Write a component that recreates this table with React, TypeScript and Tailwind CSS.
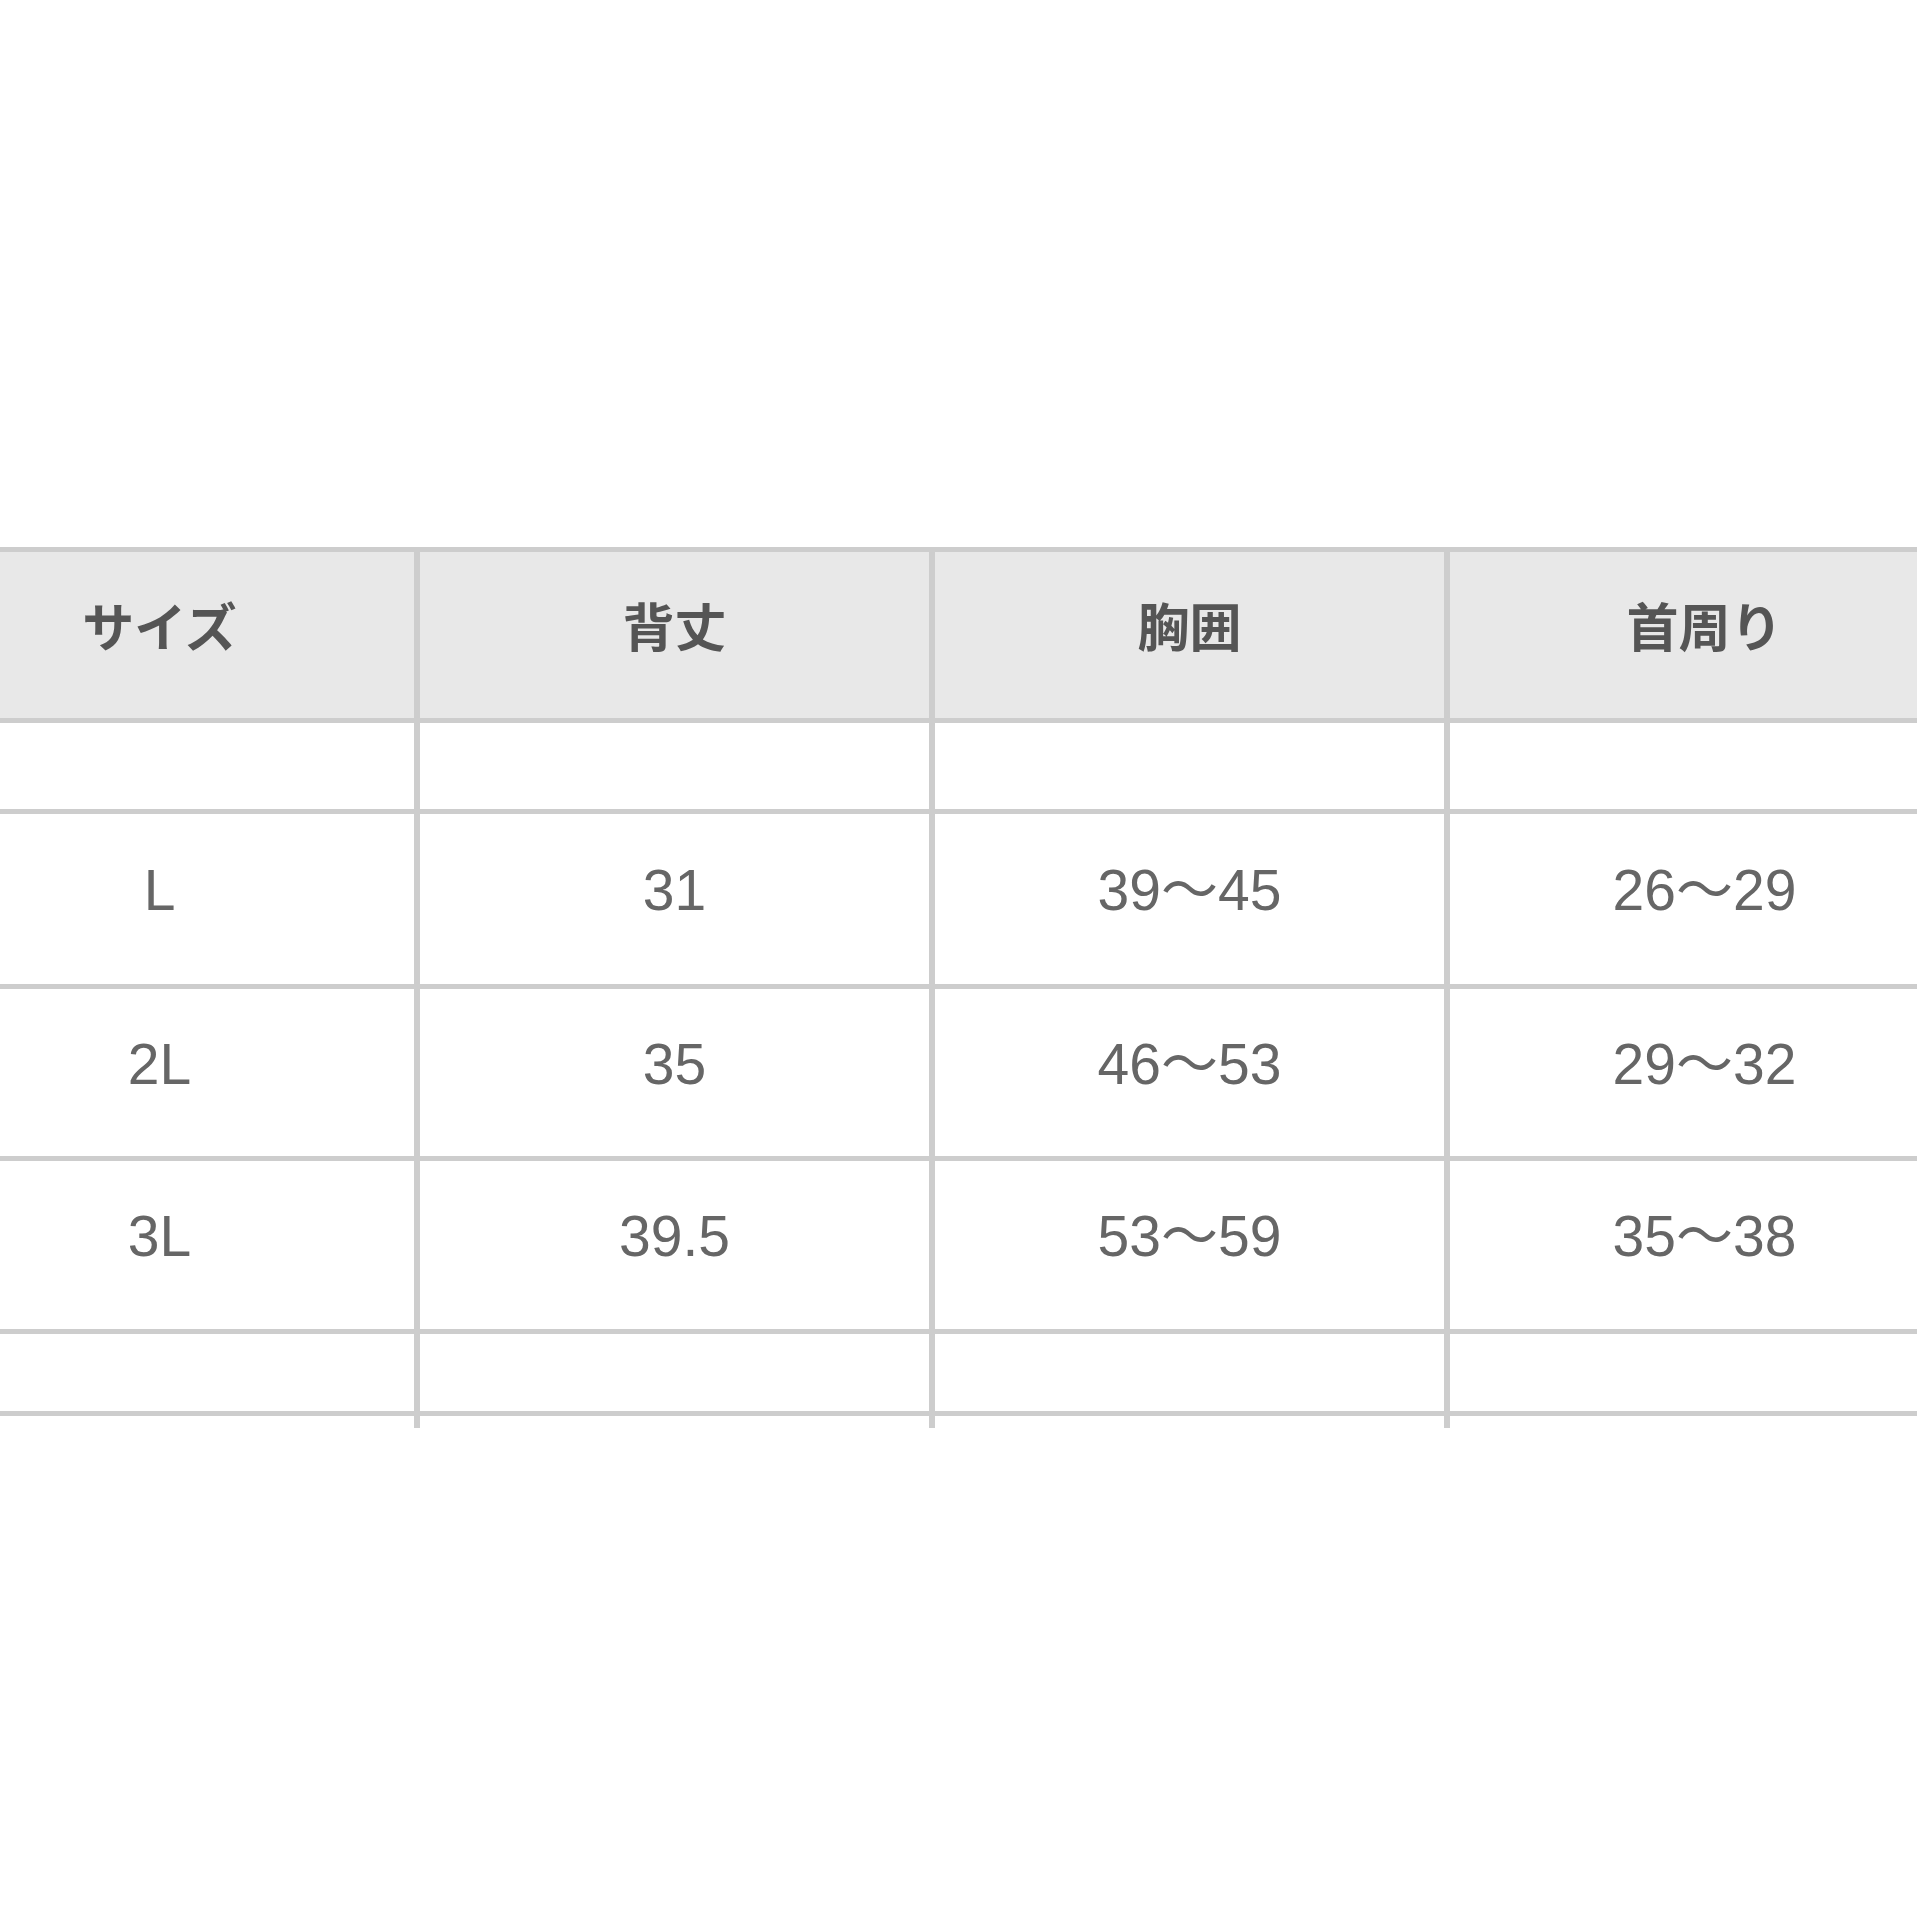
const HEADERS = ["サイズ", "背丈", "胸囲", "首周り"]

const ROWS: { cells: string[]; h: string }[] = [
  { cells: ["", "", "", ""], h: "h-[86px]" },
  { cells: ["L", "31", "39〜45", "26〜29"], h: "h-[170px]" },
  { cells: ["2L", "35", "46〜53", "29〜32"], h: "h-[167px]" },
  { cells: ["3L", "39.5", "53〜59", "35〜38"], h: "h-[168px]" },
  { cells: ["", "", "", ""], h: "h-[77px]" },
]

export default function App() {
  return (
    <div className="w-full min-h-screen bg-white overflow-hidden">
      <div className="pt-[547px] pb-[480px]">
        <div className="ml-[-95px] w-[2054px] bg-[#cdcdcd] pt-[5px] grid grid-cols-[repeat(4,509px)] gap-x-[6px] gap-y-[5px]">
          {HEADERS.map((h) => (
            <div
              key={h}
              className="h-[166px] bg-[#e8e8e8] flex items-center justify-center pb-[20px] text-[52px] leading-none font-bold text-[#555555] font-['Noto_Sans_CJK_JP',sans-serif]"
            >
              {h}
            </div>
          ))}
          {ROWS.map((row, i) =>
            row.cells.map((c, j) => (
              <div
                key={`${i}-${j}`}
                className={`${row.h} bg-white flex items-center justify-center pb-[17px] text-[57px] leading-none text-[#666666] font-['Liberation_Sans','Noto_Sans_CJK_JP',sans-serif]`}
              >
                {c}
              </div>
            ))
          )}
          {HEADERS.map((h) => (
            <div key={`tail-${h}`} className="h-[12px] bg-white" />
          ))}
        </div>
      </div>
    </div>
  )
}
